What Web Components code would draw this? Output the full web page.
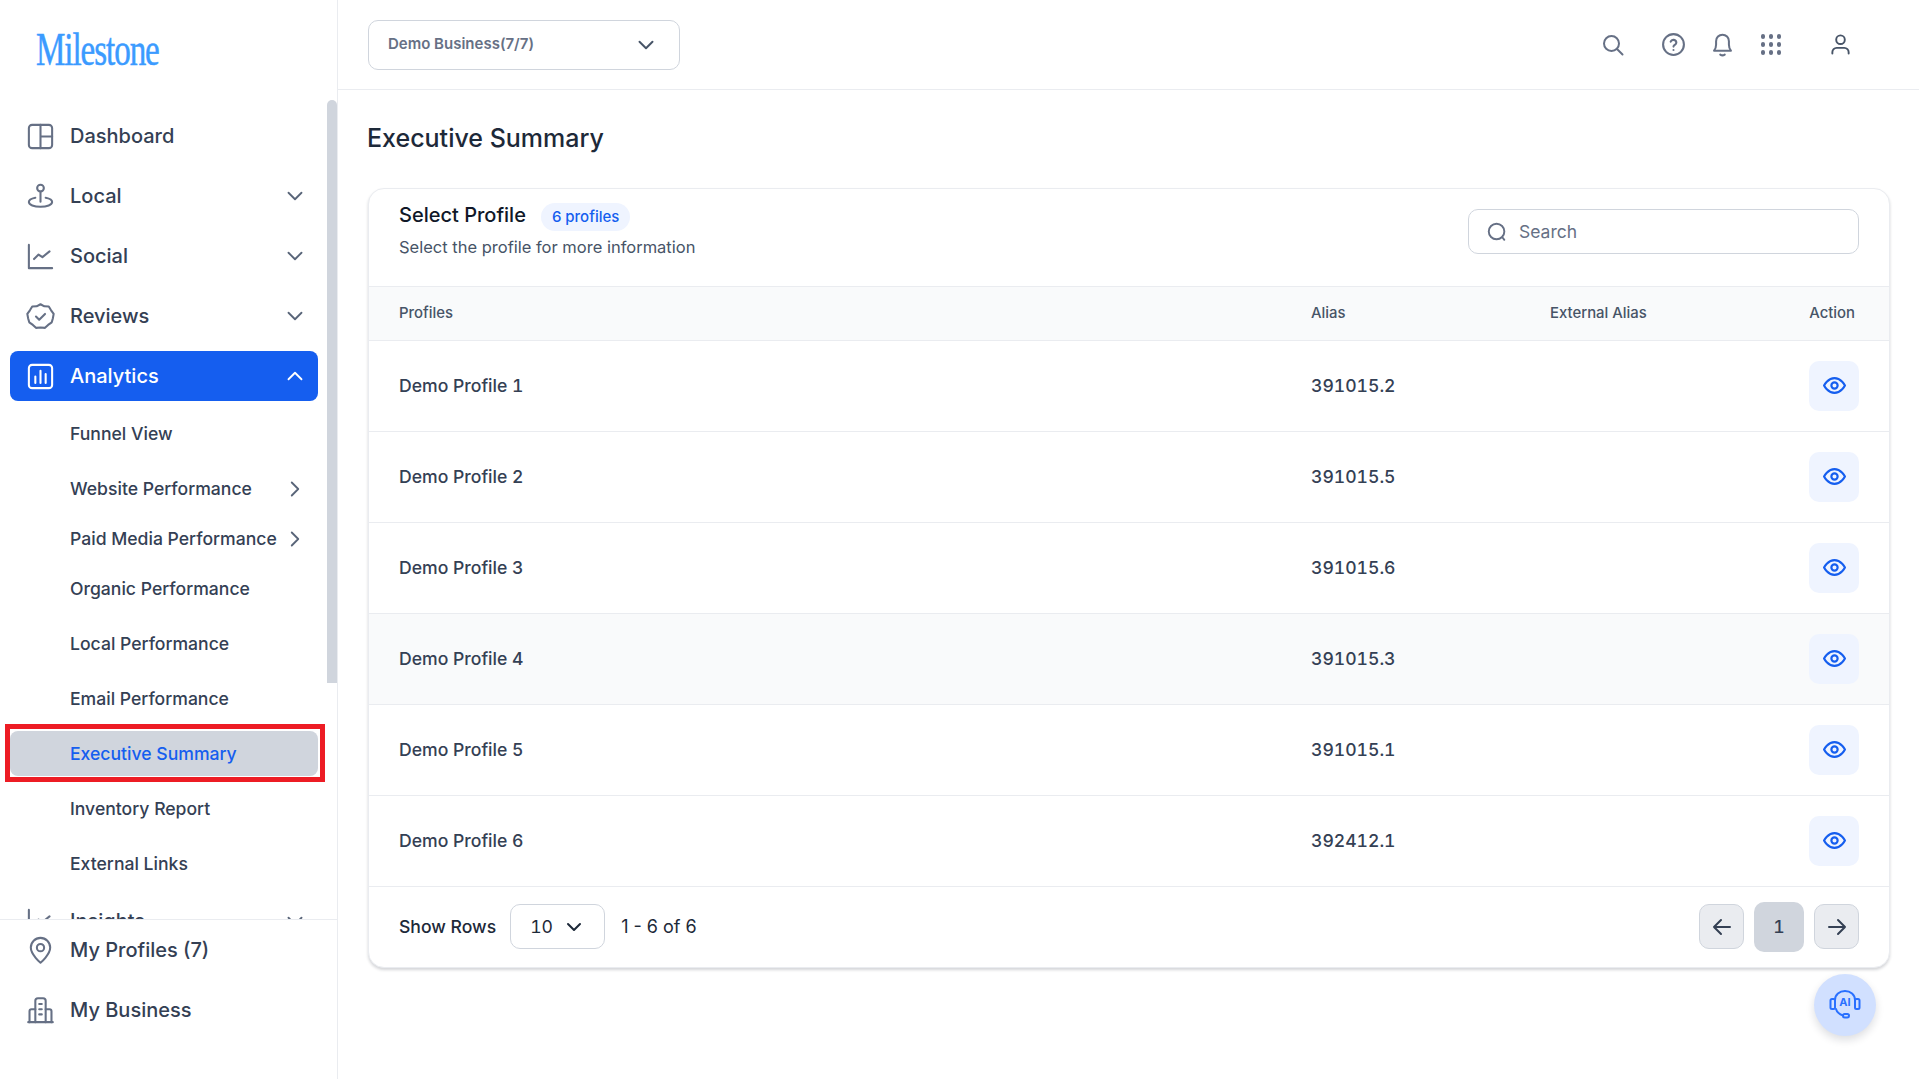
<!DOCTYPE html>
<html lang="en">
<head>
<meta charset="utf-8">
<title>Executive Summary</title>
<style>
  html, body { margin: 0; height: 100%; overflow: hidden; background: #fff; font-family: Inter, "Liberation Sans", sans-serif; }
</style>
</head>
<body>
<app-shell>
  <side-bar slot="side">
    <nav-item icon="dashboard">Dashboard</nav-item>
    <nav-item icon="local" chevron="down">Local</nav-item>
    <nav-item icon="social" chevron="down">Social</nav-item>
    <nav-item icon="reviews" chevron="down">Reviews</nav-item>
    <nav-item icon="analytics" chevron="up" active>Analytics</nav-item>
    <sub-item>Funnel View</sub-item>
    <sub-item arrow>Website Performance</sub-item>
    <sub-item arrow tight>Paid Media Performance</sub-item>
    <sub-item tight>Organic Performance</sub-item>
    <sub-item>Local Performance</sub-item>
    <sub-item>Email Performance</sub-item>
    <sub-item current>Executive Summary</sub-item>
    <sub-item>Inventory Report</sub-item>
    <sub-item>External Links</sub-item>
    <nav-item icon="social" chevron="down">Insights</nav-item>
    <nav-item slot="bottom" icon="pin">My Profiles (7)</nav-item>
    <nav-item slot="bottom" icon="building">My Business</nav-item>
  </side-bar>
  <top-bar slot="top"></top-bar>
  <h-title>Executive Summary</h-title>
  <profile-card count="6 profiles">
    <profile-row name="Demo Profile 1" alias="391015.2"></profile-row>
    <profile-row name="Demo Profile 2" alias="391015.5"></profile-row>
    <profile-row name="Demo Profile 3" alias="391015.6"></profile-row>
    <profile-row name="Demo Profile 4" alias="391015.3" hover></profile-row>
    <profile-row name="Demo Profile 5" alias="391015.1"></profile-row>
    <profile-row name="Demo Profile 6" alias="392412.1"></profile-row>
  </profile-card>
  <ai-button></ai-button>
</app-shell>

<script>
const ICONS = {
  dashboard: '<rect x="3" y="3" width="18" height="18" rx="2.5"/><path d="M12 3v18M12 12h9"/>',
  local: '<circle cx="12" cy="5.500" r="2.600"/><path d="M12 8.100V16"/><path d="M8 13c-3 .6-5 1.700-5 3.300C3 18.400 7 20 12 20s9-1.600 9-3.700c0-1.600-2-2.700-5-3.300"/>',
  social: '<path d="M3 3v18h18"/><path d="M7 14l3.500-3.500 3 2L19 8"/>',
  reviews: '<path d="M12 2.500l3 1.600 3.400.2 1.800 2.900 2 2.800-.6 3.300-.9 3.200-2.800 2-2.400 2.300-3.500-.3-3.500.3-2.400-2.300-2.800-2-.9-3.200-.6-3.300 2-2.800 1.800-2.900 3.400-.2z"/><path d="M8.500 12l2.500 2.500 4.500-4.500"/>',
  analytics: '<rect x="3" y="3" width="18" height="18" rx="2.5"/><path d="M8 17v-5M12 17V7.500M16 17v-7"/>',
  pin: '<path d="M12 21.500s-7.500-6.300-7.500-11.800a7.500 7.500 0 0 1 15 0c0 5.500-7.500 11.800-7.500 11.800z"/><circle cx="12" cy="9.800" r="2.800"/>',
  building: '<path d="M2.500 21h19"/><path d="M8 21V4.500a2 2 0 0 1 2-2h4a2 2 0 0 1 2 2V21"/><path d="M8 11H5a1.500 1.500 0 0 0-1.500 1.500V21M16 11h3a1.500 1.500 0 0 1 1.500 1.500V21"/><path d="M11 7h2M11 11h2M11 15h2"/>',
  down: '<path d="M6 9l6 6 6-6"/>',
  up: '<path d="M6 15l6-6 6 6"/>',
  right: '<path d="M9 6l6 6-6 6"/>',
  search: '<circle cx="10.500" cy="10.500" r="7.500"/><path d="M16 16l5.500 5.500"/>',
  searchSmall: '<circle cx="11.500" cy="11.500" r="8.500"/><path d="M18 18l2 2.500"/>',
  help: '<circle cx="12" cy="12" r="10"/><path d="M9.300 9.300a2.800 2.800 0 0 1 5.400.9c0 1.900-2.700 2.400-2.700 3.800"/><path d="M12 17.200v.1"/>',
  bell: '<path d="M4.500 17.500c1.300-1.500 1.800-3 1.800-5.500V9a5.700 5.700 0 0 1 11.400 0v3c0 2.500.5 4 1.800 5.500z"/><path d="M10 21c1.200.8 2.800.8 4 0"/>',
  user: '<circle cx="12" cy="7" r="4.500"/><path d="M3.500 21.500V20a4.500 4.500 0 0 1 4.500-4.500h8a4.500 4.500 0 0 1 4.500 4.500v1.500"/>',
  eye: '<path d="M2 12s3.600-7 10-7 10 7 10 7-3.600 7-10 7-10-7-10-7z"/><circle cx="12" cy="12" r="3"/>',
  left: '<path d="M20 12H4M11 5l-7 7 7 7"/>',
  next: '<path d="M4 12h16M13 5l7 7-7 7"/>'
};

function icon(name, size, width) {
  return `<svg width="${size}" height="${size}" viewBox="0 0 24 24" fill="none" stroke="currentColor" stroke-width="${width || 2}" stroke-linecap="round" stroke-linejoin="round" style="display:block;flex:none">${ICONS[name]}</svg>`;
}

class AppShell extends HTMLElement {
  constructor() {
    super();
    this.attachShadow({ mode: 'open' });
    this.shadowRoot.innerHTML = `
      <style>
        :host { display: grid; grid-template-columns: 338px 1fr; grid-template-rows: 90px 1fr; height: 100vh; position: relative; overflow: hidden; }
        .side { grid-row: 1 / 3; display: block; min-height: 0; }
        main { padding: 32px 29px 0 30px; min-width: 0; }
      </style>
      <div class="side"><slot name="side"></slot></div>
      <div><slot name="top"></slot></div>
      <main><slot></slot></main>
    `;
  }
}

class SideBar extends HTMLElement {
  constructor() {
    super();
    this.attachShadow({ mode: 'open' });
    this.shadowRoot.innerHTML = `
      <style>
        :host { display: flex; flex-direction: column; height: 1079px; box-sizing: border-box; border-right: 1px solid #eaecf0; position: relative; }
        .logo { height: 100px; flex: none; box-sizing: border-box; padding: 25px 0 0 36px; }
        .logo span { display: inline-block; font: 400 46px/50px "Liberation Serif", serif; color: #3b9bff; transform: scaleX(.72); transform-origin: left center; letter-spacing: -1.5px; -webkit-text-stroke: .5px #3b9bff; }
        .scroll { flex: none; height: 819px; overflow: hidden; padding-top: 11px; box-sizing: border-box; display: flex; flex-direction: column; gap: 10px; }
        .thumb { position: absolute; top: 100px; right: 0; width: 10px; height: 583px; border-radius: 5px 5px 0 0; background: #d0d5dd; }
        .bottom { flex: none; border-top: 1px solid #eaecf0; padding-top: 5px; display: flex; flex-direction: column; gap: 10px; background: #fff; }
        .mark { position: absolute; left: 5px; top: 724px; width: 320px; height: 58px; box-sizing: border-box; border: 5px solid #ed1c24; pointer-events: none; }
      </style>
      <div class="logo"><span>Milestone</span></div>
      <div class="scroll"><slot></slot></div>
      <div class="bottom"><slot name="bottom"></slot></div>
      <div class="thumb"></div>
      <div class="mark"></div>
    `;
  }
}

class NavItem extends HTMLElement {
  constructor() {
    super();
    this.attachShadow({ mode: 'open' });
  }
  connectedCallback() {
    const chevron = this.getAttribute('chevron');
    this.shadowRoot.innerHTML = `
      <style>
        :host { display: flex; flex: none; align-items: center; height: 50px; width: 308px; margin-left: 10px; box-sizing: border-box; padding: 0 10px 0 15px; border-radius: 8px; color: #344054; font: 500 20px/24px Inter, sans-serif; }
        :host([active]) { background: #155eef; color: #fff; }
        .ic { color: #667085; margin-right: 14px; }
        :host([active]) .ic { color: #fff; }
        .txt { flex: 1; }
        .ch { color: #596579; }
        :host([active]) .ch { color: #fff; }
      </style>
      <span class="ic">${icon(this.getAttribute('icon'), 31, 1.6)}</span>
      <span class="txt"><slot></slot></span>
      ${chevron ? `<span class="ch">${icon(chevron, 26, 1.7)}</span>` : ''}
    `;
  }
}

class SubItem extends HTMLElement {
  constructor() {
    super();
    this.attachShadow({ mode: 'open' });
  }
  connectedCallback() {
    this.shadowRoot.innerHTML = `
      <style>
        :host { display: flex; flex: none; align-items: center; height: 45px; width: 308px; margin-left: 10px; box-sizing: border-box; padding: 0 10px 0 60px; border-radius: 8px; color: #344054; font: 450 17.600px/22px Inter, sans-serif; }
        :host([tight]) { margin-top: -5px; }
        :host([current]) { background: #d0d5dd; color: #155eef; }
        .txt { flex: 1; }
        .ch { color: #596579; }
      </style>
      <span class="txt"><slot></slot></span>
      ${this.hasAttribute('arrow') ? `<span class="ch">${icon('right', 26, 1.7)}</span>` : ''}
    `;
  }
}

class TopBar extends HTMLElement {
  constructor() {
    super();
    this.attachShadow({ mode: 'open' });
    this.shadowRoot.innerHTML = `
      <style>
        :host { display: flex; align-items: center; height: 90px; box-sizing: border-box; border-bottom: 1px solid #eaecf0; padding: 0 0 0 30px; color: #667085; }
        .biz { display: flex; align-items: center; justify-content: space-between; width: 312px; height: 50px; box-sizing: border-box; border: 1px solid #d0d5dd; border-radius: 10px; padding: 0 20px 0 19px; font: 600 15px/20px Inter, sans-serif; margin-top: 1px; }
        .biz span { position: relative; top: -1px; }
        .biz svg { color: #475467; }
        .icons { margin-left: auto; display: flex; align-items: center; margin-right: 65px; }
        .icons > div { flex: none; width: 28px; display: flex; justify-content: center; }
        .dots { display: grid; grid-template-columns: repeat(3, 4.500px); gap: 3.500px; justify-content: center; }
        .dots i { width: 4.500px; height: 4.500px; border-radius: 50%; background: #667085; }
      </style>
      <div class="biz"><span>Demo Business(7/7)</span>${icon('down', 26, 1.8)}</div>
      <div class="icons">
        <div style="margin-right:32px">${icon('search', 24, 2)}</div>
        <div style="margin-right:21px">${icon('help', 25, 2)}</div>
        <div style="margin-right:21px">${icon('bell', 27, 1.8)}</div>
        <div class="dots" style="margin-right:41px;display:grid"><i></i><i></i><i></i><i></i><i></i><i></i><i></i><i></i><i></i></div>
        <div style="color:#475467">${icon('user', 23, 2)}</div>
      </div>
    `;
  }
}

class HTitle extends HTMLElement {
  constructor() {
    super();
    this.attachShadow({ mode: 'open' });
    this.shadowRoot.innerHTML = `
      <style>
        :host { display: block; margin: 0 0 34px -1px; color: #1d2939; font: 450 25px/32px Inter, sans-serif; }
      </style>
      <slot></slot>
    `;
  }
}

class ProfileCard extends HTMLElement {
  constructor() {
    super();
    this.attachShadow({ mode: 'open' });
  }
  connectedCallback() {
    this.shadowRoot.innerHTML = `
      <style>
        :host { display: block; box-sizing: border-box; height: 780px; border: 1px solid #eaecf0; border-radius: 16px; box-shadow: 0 2px 3px rgba(16,24,40,.18); overflow: hidden; background: #fff; color: #344054; }
        .head { display: flex; justify-content: space-between; height: 98px; box-sizing: border-box; padding: 0 30px 0 30px; border-bottom: 1px solid #eaecf0; }
        .line { display: flex; align-items: center; gap: 15px; margin-top: 12px; height: 28px; }
        h2 { margin: 0; font: 450 20px/28px Inter, sans-serif; color: #101828; }
        .badge { height: 28px; padding: 0 11px; border-radius: 14px; background: #eff4ff; color: #155eef; font: 450 15px/28px Inter, sans-serif; margin-top: 3px; }
        p { margin: 6px 0 0; font: 400 16.500px/24px Inter, sans-serif; color: #475467; }
        .search { margin-top: 20px; width: 391px; height: 45px; box-sizing: border-box; border: 1px solid #d0d5dd; border-radius: 10px; display: flex; align-items: center; gap: 11px; padding: 0 17px; color: #667085; font: 400 17.500px/24px Inter, sans-serif; }
        .cols { display: grid; grid-template-columns: 912px 239px 1fr auto; align-items: center; height: 54px; box-sizing: border-box; padding: 0 34px 1px 30px; background: #f9fafb; border-bottom: 1px solid #eaecf0; color: #475467; font: 500 14.900px/20px Inter, sans-serif; }
        .foot { display: flex; align-items: center; height: 80px; box-sizing: border-box; padding: 0 30px 1px 30px; color: #1d2939; font: 450 17.600px/24px Inter, sans-serif; }
        .sel { display: flex; align-items: center; justify-content: space-between; box-sizing: border-box; width: 95px; height: 45px; margin: 0 16px 0 14px; padding: 0 18px 0 19px; border: 1px solid #d0d5dd; border-radius: 10px; font-weight: 400; font-variant-numeric: tabular-nums; }
        .range { font-size: 18px; font-weight: 400; }
        .pager { margin-left: auto; display: flex; align-items: center; gap: 10px; color: #344054; }
        .pager div { display: flex; align-items: center; justify-content: center; box-sizing: border-box; width: 45px; height: 45px; border: 1px solid #d0d5dd; border-radius: 10px; background: #eaecf0; }
        .pager .on { width: 50px; height: 50px; border: 0; background: #d0d5dd; font-variant-numeric: tabular-nums; }
      </style>
      <div class="head">
        <div>
          <div class="line"><h2>Select Profile</h2><span class="badge">${this.getAttribute('count')}</span></div>
          <p>Select the profile for more information</p>
        </div>
        <div class="search">${icon('searchSmall', 22, 2.100)}<span>Search</span></div>
      </div>
      <div class="cols"><span>Profiles</span><span>Alias</span><span>External Alias</span><span>Action</span></div>
      <slot></slot>
      <div class="foot">
        <span>Show Rows</span>
        <div class="sel"><span>10</span>${icon('down', 24, 2)}</div>
        <span class="range">1 - 6 of 6</span>
        <div class="pager">
          <div>${icon('left', 24, 2)}</div>
          <div class="on">1</div>
          <div>${icon('next', 24, 2)}</div>
        </div>
      </div>
    `;
  }
}

class ProfileRow extends HTMLElement {
  constructor() {
    super();
    this.attachShadow({ mode: 'open' });
  }
  connectedCallback() {
    this.shadowRoot.innerHTML = `
      <style>
        :host { display: grid; grid-template-columns: 912px 239px 1fr 50px; align-items: center; height: 91px; box-sizing: border-box; padding: 0 30px 0 30px; border-bottom: 1px solid #eaecf0; color: #344054; font: 450 17.600px/24px Inter, sans-serif; font-variant-numeric: tabular-nums; }
        :host([hover]) { background: #f9fafb; }
        .view { width: 50px; height: 50px; border-radius: 10px; background: #eff4ff; color: #155eef; display: flex; align-items: center; justify-content: center; }
        .view svg { margin-top: -1px; }
      </style>
      <span>${this.getAttribute('name')}</span>
      <span>${this.getAttribute('alias')}</span>
      <span></span>
      <div class="view">${icon('eye', 25, 2.100)}</div>
    `;
  }
}

class AiButton extends HTMLElement {
  constructor() {
    super();
    this.attachShadow({ mode: 'open' });
    this.shadowRoot.innerHTML = `
      <style>
        :host { position: absolute; left: 1814px; top: 974px; width: 62px; height: 62px; border-radius: 50%; background: #d1e0ff; color: #2970ff; box-shadow: 0 4px 8px rgba(16,24,40,.14); display: flex; align-items: center; justify-content: center; }
        .wrap { position: relative; width: 32px; height: 32px; }
        b { position: absolute; left: 0; right: 0; top: 7px; text-align: center; font: 700 11px/13px Inter, sans-serif; }
      </style>
      <div class="wrap">
        <svg width="32" height="32" viewBox="0 0 32 32" fill="none" stroke="currentColor" stroke-width="2" stroke-linecap="round" stroke-linejoin="round">
          <path d="M6 12V11C6 5.500 10.500 2 16 2s10 3.500 10 9v1"/>
          <rect x="1.500" y="10" width="4.500" height="10" rx="1.500"/>
          <rect x="26" y="10" width="4.500" height="10" rx="1.500"/>
          <path d="M7 20c1 3.500 4 5.500 7 6.500"/>
          <rect x="14" y="25" width="6" height="3.500" rx="1.700"/>
        </svg>
        <b>AI</b>
      </div>
    `;
  }
}

customElements.define('app-shell', AppShell);
customElements.define('side-bar', SideBar);
customElements.define('nav-item', NavItem);
customElements.define('sub-item', SubItem);
customElements.define('top-bar', TopBar);
customElements.define('h-title', HTitle);
customElements.define('profile-card', ProfileCard);
customElements.define('profile-row', ProfileRow);
customElements.define('ai-button', AiButton);
</script>
</body>
</html>
